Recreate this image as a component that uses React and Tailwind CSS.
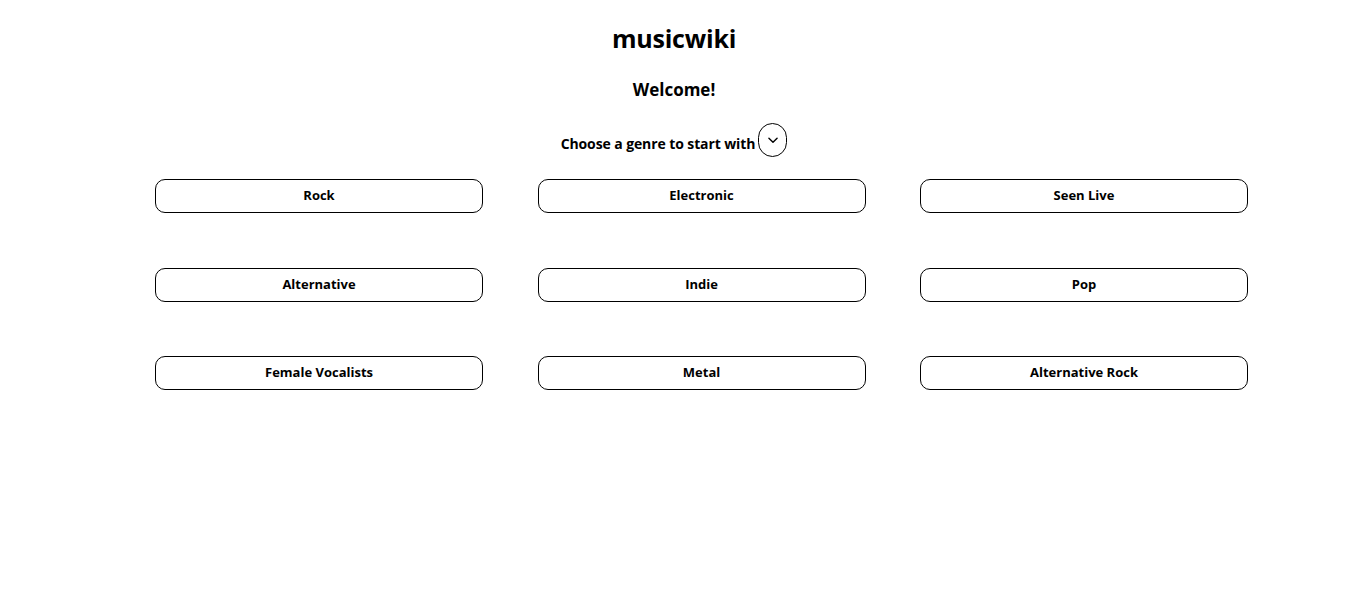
import React from "react";

const genres = [
  "Rock",
  "Electronic",
  "Seen Live",
  "Alternative",
  "Indie",
  "Pop",
  "Female Vocalists",
  "Metal",
  "Alternative Rock",
];

export default function App() {
  return (
    <div
      className="min-h-[608px] w-full bg-white text-black"
      style={{ fontFamily: '"Open Sans", "Noto Sans", sans-serif' }}
    >
      <div className="flex flex-col items-center pr-[9px]">
        <h1 className="mt-[22px] text-[25px] font-bold leading-[32px] tracking-[-0.2px]">musicwiki</h1>
        <h2 className="mt-[24px] text-[17px] font-bold leading-[24px]">Welcome!</h2>
        <div className="mt-[21px] flex items-center">
          <span className="mt-[7px] text-[14px] font-bold leading-[20px] tracking-[-0.1px]">Choose a genre to start with</span>
          <button className="ml-[3px] flex h-[34px] w-[29px] items-center justify-center rounded-full border border-black bg-white">
            <svg width="14" height="14" viewBox="0 0 24 24" fill="none" stroke="black" strokeWidth="2.4" strokeLinecap="round" strokeLinejoin="round">
              <path d="M5 9l7 7 7-7" />
            </svg>
          </button>
        </div>
      </div>
      <div className="ml-[155px] mt-[22px] grid w-[1093px] grid-cols-[328px_328px_328px] gap-x-[54.5px] gap-y-[54.5px]">
        {genres.map((g) => (
          <button
            key={g}
            className="flex h-[34px] w-[328px] items-center justify-center rounded-[10px] border border-black bg-white text-[13px] font-bold"
          >
            {g}
          </button>
        ))}
      </div>
    </div>
  );
}
